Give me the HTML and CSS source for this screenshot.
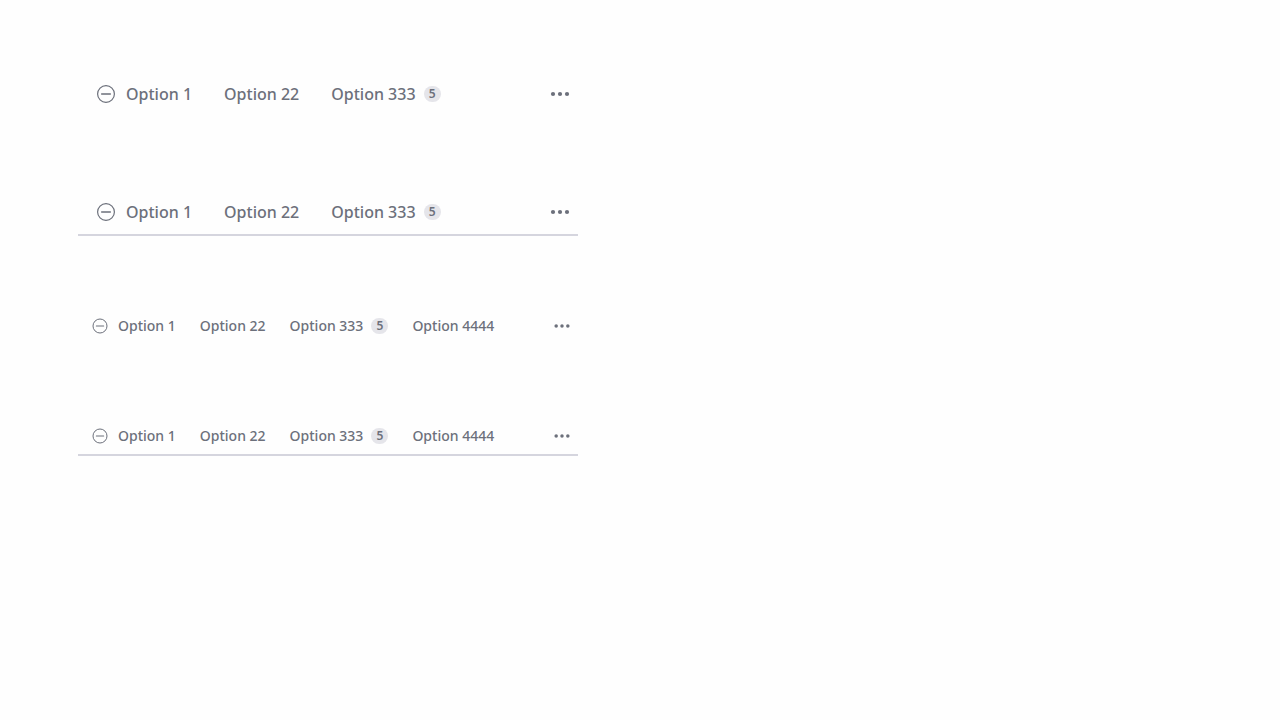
FILE: index.html
```
<!DOCTYPE html>
<html lang="en">
<head>
<meta charset="utf-8">
<meta name="viewport" content="width=device-width, initial-scale=1">
<title>Tabs</title>
<link rel="stylesheet" href="styles.css">
</head>
<body>
<svg class="defs" aria-hidden="true">
  <symbol id="minus" viewBox="0 0 24 24"><circle cx="12" cy="12" r="8.4" fill="none" stroke="currentColor" stroke-width="1.2"/><path d="M7.6 12h8.8" fill="none" stroke="currentColor" stroke-width="1.3" stroke-linecap="round"/></symbol>
  <symbol id="more" viewBox="0 0 24 24"><g fill="currentColor"><circle cx="5" cy="12" r="2.1"/><circle cx="12" cy="12" r="2.1"/><circle cx="19" cy="12" r="2.1"/></g></symbol>
</svg>
<main class="stack">
  <nav class="tabs" aria-label="Large">
    <button class="tab" type="button"><svg class="icon"><use href="#minus"/></svg><span>Option 1</span></button>
    <button class="tab" type="button"><span>Option 22</span></button>
    <button class="tab" type="button"><span>Option 333</span><span class="badge">5</span></button>
    <button class="more" type="button" aria-label="More"><svg class="icon"><use href="#more"/></svg></button>
  </nav>
  <nav class="tabs lined" aria-label="Large with line">
    <button class="tab" type="button"><svg class="icon"><use href="#minus"/></svg><span>Option 1</span></button>
    <button class="tab" type="button"><span>Option 22</span></button>
    <button class="tab" type="button"><span>Option 333</span><span class="badge">5</span></button>
    <button class="more" type="button" aria-label="More"><svg class="icon"><use href="#more"/></svg></button>
  </nav>
  <nav class="tabs small" aria-label="Small">
    <button class="tab" type="button"><svg class="icon"><use href="#minus"/></svg><span>Option 1</span></button>
    <button class="tab" type="button"><span>Option 22</span></button>
    <button class="tab" type="button"><span>Option 333</span><span class="badge">5</span></button>
    <button class="tab" type="button"><span>Option 4444</span></button>
    <button class="more" type="button" aria-label="More"><svg class="icon"><use href="#more"/></svg></button>
  </nav>
  <nav class="tabs small lined" aria-label="Small with line">
    <button class="tab" type="button"><svg class="icon"><use href="#minus"/></svg><span>Option 1</span></button>
    <button class="tab" type="button"><span>Option 22</span></button>
    <button class="tab" type="button"><span>Option 333</span><span class="badge">5</span></button>
    <button class="tab" type="button"><span>Option 4444</span></button>
    <button class="more" type="button" aria-label="More"><svg class="icon"><use href="#more"/></svg></button>
  </nav>
</main>
</body>
</html>
```
FILE: styles.css
```
* { box-sizing: border-box; }
body {
  margin: 0;
  background: #fefefe;
  color: #6c707b;
  font-family: "Noto Sans", sans-serif;
}
.defs { display: none; }
.stack {
  display: grid;
  gap: 70px;
  max-width: 578px;
  padding: 70px 0 70px 78px;
}
.tabs {
  display: flex;
  align-items: stretch;
}
.lined { box-shadow: inset 0 -2px #d5d5de; }
.tab, .more {
  display: flex;
  align-items: center;
  gap: 8px;
  border: 0;
  background: none;
  color: inherit;
  font: 500 16px/24px "Noto Sans", sans-serif;
  white-space: nowrap;
}
.tab { padding: 12px 16px; }
.icon {
  width: 24px;
  height: 24px;
  flex: none;
}
.more {
  margin-left: auto;
  padding: 0 6px;
}
.badge {
  min-width: 17px;
  border-radius: 8px;
  background: #e5e5ea;
  font-size: 12px;
  font-weight: 600;
  line-height: 16px;
  text-align: center;
}
.small .tab { padding: 10px 12px; font-size: 14px; line-height: 20px; }
.small .icon { width: 20px; height: 20px; }
.small .badge { font-size: 12px; line-height: 16px; }
```
